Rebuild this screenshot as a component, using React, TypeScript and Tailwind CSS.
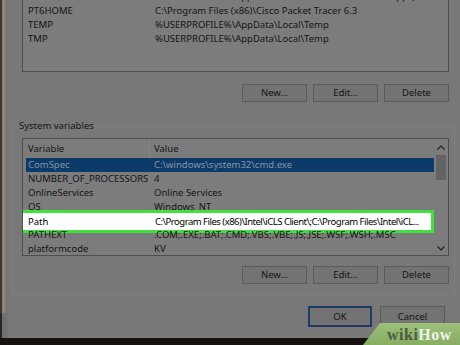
import React from 'react';

const userRows = [
    { name: 'Path', value: '%USERPROFILE%\\AppData\\Local\\Microsoft\\WindowsApps;' },
    { name: 'PT6HOME', value: 'C:\\Program Files (x86)\\Cisco Packet Tracer 6.3' },
    { name: 'TEMP', value: '%USERPROFILE%\\AppData\\Local\\Temp' },
    { name: 'TMP', value: '%USERPROFILE%\\AppData\\Local\\Temp' },
];

const systemRows = [
    { name: 'ComSpec', value: 'C:\\windows\\system32\\cmd.exe' },
    { name: 'NUMBER_OF_PROCESSORS', value: '4' },
    { name: 'OnlineServices', value: 'Online Services' },
    { name: 'OS', value: 'Windows_NT' },
    { name: 'Path', value: 'C:\\Program Files (x86)\\Intel\\iCLS Client\\;C:\\Program Files\\Intel\\iCL...' },
    { name: 'PATHEXT', value: '.COM;.EXE;.BAT;.CMD;.VBS;.VBE;.JS;.JSE;.WSF;.WSH;.MSC' },
    { name: 'platformcode', value: 'KV' },
];

const DlgButton: React.FC<{ children: React.ReactNode; primary?: boolean }> = ({ children, primary }) => (
    <div
        className={
            primary
                ? 'w-[64px] h-[21px] flex items-center justify-center bg-[#737373] border-2 border-[#1f3b63] text-[#141414]'
                : 'w-[65px] h-full flex items-center justify-center bg-[#737373] border border-[#5b5b5b] text-[#141414]'
        }
    >
        {children}
    </div>
);

const Chevron: React.FC<{ down?: boolean }> = ({ down }) => (
    <svg width="8" height="5" viewBox="0 0 8 5" className={down ? 'rotate-180' : ''}>
        <path d="M0.5 4.5 L4 1 L7.5 4.5" fill="none" stroke="#222" strokeWidth="1.2" />
    </svg>
);

export default function App() {
    return (
        <div className="relative w-[460px] h-[345px] overflow-hidden bg-[#787878] flex flex-col font-['Noto_Sans',sans-serif] text-[9.5px] leading-none">
            <div className="flex flex-1 min-h-0">
                {/* edge of the window behind */}
                <div className="w-[7px] flex flex-col">
                    <div className="flex-1 flex">
                        <div className="w-[2px] bg-[#3b362f]" />
                        <div className="w-[4px] bg-[#8a8373]" />
                        <div className="w-[1px] bg-[#6d6d6d]" />
                    </div>
                    <div className="h-[25px] flex">
                        <div className="w-[2px] bg-[#2a2622]" />
                        <div className="flex-1 bg-[#707070]" />
                    </div>
                </div>

                <div className="flex-1 flex flex-col">
                    {/* user variables list */}
                    <div className="ml-[15px] w-[427px] h-[72px] bg-[#7c7c7c] border-x border-b border-[#4f4f4f] overflow-hidden">
                        <div className="-mt-[10px]">
                            {userRows.map((r) => (
                                <div key={r.name} className="h-[14px] flex items-center text-[#141414] whitespace-nowrap">
                                    <div className="w-[128px] shrink-0 pl-[5px]">{r.name}</div>
                                    <div className="pl-[4px]">{r.value}</div>
                                </div>
                            ))}
                        </div>
                    </div>

                    <div className="ml-[15px] w-[427px] h-[18px] mt-[12px] flex justify-end gap-[6px]">
                        <DlgButton>New...</DlgButton>
                        <DlgButton>Edit...</DlgButton>
                        <DlgButton>Delete</DlgButton>
                    </div>

                    {/* system variables group */}
                    <div className="relative mt-[24px] mx-[5px] border border-[#7f7f7f] pl-[9px] pt-[11px] pb-[10px]">
                        <div className="absolute -top-[6px] left-[5px] px-[1px] bg-[#787878] text-[#141414]">
                            System variables
                        </div>

                        <div className="w-[427px] h-[118px] bg-[#7c7c7c] border border-[#4f4f4f] flex overflow-hidden">
                            <div className="flex-1 min-w-0">
                                <div className="h-[19px] flex items-center text-[#141414]">
                                    <div className="w-[127px] shrink-0 pl-[5px] h-full flex items-center border-r border-[#858585]">Variable</div>
                                    <div className="pl-[4px]">Value</div>
                                </div>
                                {systemRows.map((r, i) =>
                                    r.name === 'Path' ? (
                                        <div key={r.name} className="relative h-[14px] ml-[3px]">
                                            {/* highlighted (selected) row */}
                                            <div className="absolute -left-[9px] right-0 -top-[4px] -bottom-[5px] border-[3px] border-[#3fe23a] bg-white text-black flex items-center whitespace-nowrap overflow-hidden">
                                                <div className="w-[135px] shrink-0 pl-[8px]">{r.name}</div>
                                                <div className="tracking-[-0.5px]">{r.value}</div>
                                            </div>
                                        </div>
                                    ) : (
                                        <div
                                            key={r.name}
                                            className={
                                                'relative h-[14px] ml-[3px] flex items-center whitespace-nowrap ' +
                                                (i === 0 ? 'bg-[#0b3c69] text-[#8793a3]' : 'text-[#141414]')
                                            }
                                        >
                                            <div className="w-[126px] shrink-0 pl-[2px]">{r.name}</div>
                                            <div className="pl-[2px] overflow-hidden">{r.value}</div>
                                        </div>
                                    )
                                )}
                            </div>
                            <div className="w-[14px] flex flex-col items-center">
                                <div className="h-[16px] flex items-center">
                                    <Chevron />
                                </div>
                                <div className="w-[10px] h-[25px] bg-[#636363]" />
                                <div className="flex-1" />
                                <div className="h-[14px] flex items-center">
                                    <Chevron down />
                                </div>
                            </div>
                        </div>

                        <div className="w-[427px] h-[18px] mt-[10px] flex justify-end gap-[6px]">
                            <DlgButton>New...</DlgButton>
                            <DlgButton>Edit...</DlgButton>
                            <DlgButton>Delete</DlgButton>
                        </div>
                    </div>

                    <div className="mt-[11px] pr-[15px] flex justify-end gap-[8px] h-[21px]">
                        <DlgButton primary>OK</DlgButton>
                        <div className="w-[65px] h-[21px] flex items-center justify-center bg-[#737373] border border-[#5b5b5b] text-[#141414]">
                            Cancel
                        </div>
                    </div>
                </div>
            </div>
            <div className="h-[7px] bg-[#15120f]" />

            {/* wikiHow watermark */}
            <div className="absolute right-0 bottom-0 w-[97px] h-[22px]">
                <svg width="97" height="22" viewBox="0 0 97 22" className="absolute inset-0">
                    <defs>
                        <linearGradient id="wg" x1="0" y1="0" x2="0" y2="1">
                            <stop offset="0" stopColor="#9cc17a" />
                            <stop offset="1" stopColor="#86ad62" />
                        </linearGradient>
                    </defs>
                    <polygon points="17,0 97,0 97,22 0,22" fill="url(#wg)" />
                </svg>
                <div className="absolute left-[24px] top-[4px] font-['Liberation_Serif',serif] font-bold text-[16px] leading-none tracking-[0.5px]">
                    <span className="text-[#4d5c40]">wiki</span>
                    <span className="text-[#eef2ea]">How</span>
                </div>
            </div>
        </div>
    );
}
